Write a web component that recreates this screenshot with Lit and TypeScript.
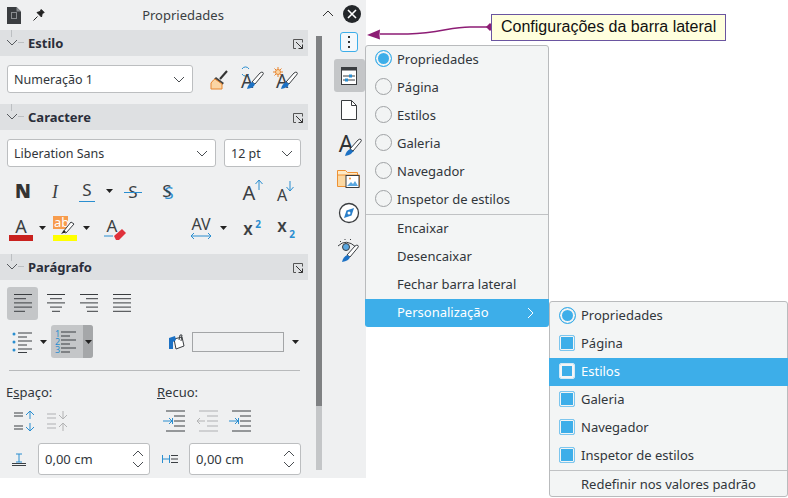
import { LitElement, html, css, svg } from "lit";
import { customElement } from "lit/decorators.js";

const dark = "#3b3f43";
const blue = "#2a8ed0";
const ic = (w: number, h: number, body: unknown) =>
  html`<svg class="ic" width=${w} height=${h} viewBox="0 0 ${w} ${h}" fill="none">${body}</svg>`;
const line = (x1: number, y1: number, x2: number, y2: number, c = dark, w = 1) =>
  svg`<line x1=${x1} y1=${y1} x2=${x2} y2=${y2} stroke=${c} stroke-width=${w}/>`;
const txt = (x: number, y: number, s: string, size: number, fill = dark, weight = "400", family = "Noto Sans", style = "normal") =>
  svg`<text x=${x} y=${y} font-size=${size} font-weight=${weight} font-style=${style} font-family=${family} fill=${fill} text-anchor="middle">${s}</text>`;

const brushTail = (dx: number, dy: number) => svg`
  <path d="M${dx + 8} ${dy + 15}L${dx + 16} ${dy + 6}q2-1.500 3-.5t-.5 2.500L${dx + 11} ${dy + 17}z" fill="#fff" stroke=${dark}/>
  <path d="M${dx + 3} ${dy + 22}q1-5 5-7l3 2q-1 4-8 5z" fill="#1c71c4"/>`;
const arrowDrop = html`<svg class="ic" width="14" height="8" viewBox="0 0 14 8"><path d="M3 2h7l-3.500 4z" fill="#222"/></svg>`;
const chevron = html`<svg class="ic" width="12" height="7" viewBox="0 0 12 7" fill="none"><path d="M1 1l5 5 5-5" stroke="#4a4e52"/></svg>`;
const launcher = html`<svg class="ic" width="10" height="10" viewBox="0 0 10 10" fill="none"><path d="M9.500 3.500V.5H.5v9H3" stroke="#555"/><path d="M3 3l6.500 6.500M9.500 5.500v4h-4" stroke="#333"/></svg>`;

const alignIcon = (kind: string) => {
  const rows = [[0, 18], [0, 12], [0, 18], [0, 18], [0, 11]];
  const center = [[0, 18], [3, 15], [0, 18], [3, 15], [5, 13]];
  const right = [[0, 18], [6, 18], [0, 18], [6, 18], [7, 18]];
  const just = [[0, 18], [0, 18], [0, 18], [0, 18], [0, 18]];
  const set = kind === "l" ? rows : kind === "c" ? center : kind === "r" ? right : just;
  return ic(18, 21, set.map((r, i) => line(r[0], 1.5 + i * 4.2, r[1], 1.5 + i * 4.2, "#3a3d40")));
};

const indentIcon = (kind: string) =>
  kind === "off"
    ? ic(19, 22, svg`<g opacity=".35">${line(0, 1, 19, 1)}${line(8, 6, 19, 6)}${line(8, 11, 19, 11)}${line(8, 16, 19, 16)}${line(0, 21, 19, 21)}<path d="M-2 11h8M1 8l-3 3 3 3" stroke="#444"/></g>`)
    : ic(19, 22, svg`${line(0, 1, 19, 1)}${line(8, 6, 19, 6)}${line(8, 11, 19, 11)}${line(8, 16, 19, 16)}${line(0, 21, 19, 21)}<path d="M-3 11h9M3 8l3 3-3 3M6.500 8v6" stroke=${blue}/>`);

const section = (title: string) => html`
  <div class="sec">
    <svg class="twig" width="26" height="26" viewBox="0 0 26 26" fill="none">
      <path d="M11.500 0v7M18 12.500h6" stroke="#bcbfc2"/>
      <path d="M7 10l5 5 5-5" stroke="#55595d"/>
    </svg>
    <span class="sec-t">${title}</span>
    <span class="launch">${launcher}</span>
  </div>`;

const menuItems = ["Propriedades", "Página", "Estilos", "Galeria", "Navegador", "Inspetor de estilos"];

@customElement("app-root")
export class AppRoot extends LitElement {
  static styles = css`
    :host { display: block; width: 788px; height: 498px; position: relative; overflow: hidden; background: #fff; font-family: "Noto Sans", sans-serif; font-size: 13px; color: #232629; }
    .ic { display: block; overflow: visible; }
    .panel { display: flex; width: 366px; height: 478px; background: #eff0f1; }
    .deck { width: 308px; flex: none; display: flex; flex-direction: column; }
    .title { height: 30px; display: flex; align-items: center; padding-left: 7px; gap: 12px; position: relative; }
    .title-t { position: absolute; left: 0; right: -58px; text-align: center; font-size: 13px; color: #3a3e42; top: 6px; }
    .sec { height: 26px; background: #dee0e2; display: flex; align-items: center; position: relative; flex: none; }
    .twig { flex: none; margin-right: 2px; }
    .sec-t { font-weight: 700; font-size: 13px; color: #2a2e3a; }
    .launch { margin-left: auto; margin-right: 5px; margin-top: 2px; }
    .c1 { height: 48px; display: flex; align-items: center; padding: 0 0 2px 7px; box-sizing: border-box; }
    .box { background: #fff; border: 1px solid #bcbec0; border-radius: 3px; box-sizing: border-box; display: flex; align-items: center; justify-content: space-between; padding: 0 7px 0 6px; color: #31363b; font-size: 12.5px; }
    .s-style { width: 186px; height: 28px; flex: none; }
    .t1 { display: flex; margin-left: 13px; gap: 8px; align-items: center; }
    .c2 { height: 124px; padding: 9px 7px 0; box-sizing: border-box; }
    .selects { display: flex; gap: 8px; }
    .s-font { width: 209px; height: 28px; }
    .s-size { width: 77px; height: 28px; }
    .r1 { display: grid; grid-template-columns: 32px 32px 32px 14px 32px 2px 32px 53px 32px 1px 32px; height: 32px; margin-top: 8px; align-items: center; justify-items: center; }
    .r2 { display: grid; grid-template-columns: 28px 1px 14px 30px 14px 5px 32px 54px 32px 14px 6px 32px 2px 32px; height: 32px; margin-top: 5px; align-items: center; justify-items: center; }
    .shadow { font-size: 17px; line-height: 20px; color: #3b3f43; text-shadow: 2px 2px 0 #2a8ed0; }
    .c3 { flex: 1; padding: 7px 7px 0; box-sizing: border-box; }
    .aligns { display: flex; gap: 2px; }
    .ab { width: 31px; height: 33px; display: flex; align-items: center; justify-content: center; border-radius: 3px; }
    .ab.on { background: #c4c6c8; }
    .lists { display: flex; align-items: center; height: 33px; margin-top: 5px; }
    .lists > * { flex: none; }
    .lb { width: 30px; display: flex; justify-content: center; }
    .num { width: 42px; height: 33px; background: #c4c6c8; border-radius: 3px; display: flex; overflow: hidden; }
    .num-a { width: 32px; display: flex; align-items: center; padding-left: 4px; box-sizing: border-box; }
    .digits { font-size: 9px; line-height: 8px; color: #2a8ed0; width: 6px; }
    .num-b { width: 10px; background: #a5a7a9; display: flex; align-items: center; justify-content: center; }
    .para { margin-left: 75px; margin-right: 7px; }
    .swatch { width: 92px; height: 20px; border: 1px solid #a3a5a7; box-sizing: border-box; background: #eff0f1; margin-right: 5px; }
    .sep { height: 1px; background: #b8babc; margin: 12px 1px 0 2px; }
    .sp { display: flex; margin-top: 12px; margin-left: -1px; }
    .col { width: 151px; flex: none; }
    .lbl { font-size: 13px; line-height: 18px; color: #31363b; }
    .u { text-decoration: underline; }
    .tools { display: flex; align-items: center; height: 24px; margin-top: 8px; }
    .sp-a { padding-left: 8px; gap: 12px; }
    .ind-a { padding-left: 9px; gap: 14px; }
    .field { display: flex; align-items: center; margin-top: 10px; margin-left: -7px; }
    .fi { width: 38px; flex: none; display: flex; justify-content: center; }
    .fj { width: 39px; flex: none; display: flex; justify-content: center; }
    .spin { width: 112px; height: 32px; padding: 0 5px 0 6px; font-size: 13px; }
    .tabs { flex: 1; position: relative; display: flex; }
    .scroll { width: 24px; flex: none; padding-left: 8px; padding-top: 36px; box-sizing: border-box; }
    .thumb { width: 6px; height: 370px; background: #7f8183; }
    .thumb2 { width: 6px; height: 64px; background: #c4c6c8; }
    .tabcol { width: 34px; flex: none; display: flex; flex-direction: column; align-items: center; }
    .top { height: 28px; width: 100%; display: flex; }
    .tb { display: flex; align-items: center; justify-content: center; }
    .more { width: 18px; height: 20px; border: 1px solid #3daee9; border-radius: 3px; box-sizing: border-box; background: #f4f8fb; margin-top: 4px; margin-bottom: 7px; display: flex; align-items: center; justify-content: center; }
    .act { width: 31px; height: 33px; background: #c4c6c8; border-radius: 3px; }
    .t-page { margin-top: 8px; }
    .t-a { margin-top: 12px; }
    .t-g { margin-top: 10px; }
    .t-n { margin-top: 14px; }
    .t-e { margin-top: 15px; }
    .topabs { position: absolute; top: 0; left: 0; right: 0; height: 28px; }
    .up { position: absolute; left: 14px; top: 10px; }
    .close { position: absolute; left: 35px; top: 5px; }
    .menu { position: absolute; background: #f3f5f5; border: 1px solid #b9bbbd; border-radius: 3px; box-sizing: border-box; color: #31363b; }
    .m1 { left: 365px; top: 45px; width: 184px; height: 281px; }
    .m2 { left: 549px; top: 301px; width: 239px; height: 196px; }
    .mi { height: 28px; display: flex; align-items: center; position: relative; padding-left: 31px; padding-bottom: 2px; box-sizing: border-box; }
    .mi.hi { background: #3daee9; color: #fff; }
    .m1 .hi { border-radius: 0 0 3px 3px; margin: 0 -1px -1px; padding-left: 32px; }
    .m2 .hi { margin: 0 -1px; padding-left: 32px; }
    .msep { height: 1px; background: #c0c2c4; }
    .mark { position: absolute; left: 9px; top: 4px; width: 17px; height: 17px; box-sizing: border-box; background: #f2f4f4; border: 1px solid #9fa2a4; border-radius: 50%; }
    .m2 .mark { left: 9px; top: 5px; }
    .mark.sel { border: 1px solid #3daee9; background: #3daee9; box-shadow: inset 0 0 0 2px #f2f4f4; }
    .chk { position: absolute; left: 9px; top: 5px; width: 16px; height: 16px; box-sizing: border-box; border: 1px solid #7dc6ee; border-radius: 2px; background: #3daee9; box-shadow: inset 0 0 0 1px #f2f4f4; }
    .hi .chk { left: 10px; background: #3daee9; border: 1px solid #d5e9f5; box-shadow: inset 0 0 0 2px #f4f5f6; }
    .arrow { position: absolute; right: 15px; top: 8px; }
    .callout { position: absolute; left: 491px; top: 14px; width: 235px; height: 27px; box-sizing: border-box; background: #ffffdd; border: 1px solid #6a55a0; font-family: "Liberation Sans", sans-serif; font-size: 16px; color: #111; padding-left: 9px; line-height: 24px; white-space: nowrap; }
    .conn { position: absolute; left: 360px; top: 14px; }
  `;

  render() {
    return html`
      <div class="panel">
        <div class="deck">
          <div class="title">
            ${ic(14, 17, svg`<path d="M0 0h9.500L14 4.500V17H0z" fill="#3a3d40"/><rect x="4.500" y="5.500" width="5" height="6" stroke="#8a8d90" fill="none"/><path d="M9.500 0L14 4.500H9.500z" fill="#8a8d90"/>`)}
            ${ic(12, 12, svg`<path d="M.5 11.500l4-4M4 3.500l4.500 4.500.7-3.500 2-1-3-3-1 2z" stroke="#222" fill="#222"/>`)}
            <span class="title-t">Propriedades</span>
          </div>
          ${section("Estilo")}
          <div class="c1">
            <div class="box s-style"><span>Numeração 1</span>${chevron}</div>
            <div class="t1">
              ${ic(24, 24, svg`<path d="M14 12l7-8" stroke="#333" stroke-width="2"/><path d="M10 10l8 6-2 2-8-6z" fill="#444"/><path d="M5 16q3-4 4-4l7 5v5H5z" fill="#fbd5a4" stroke="#e8852f"/>`)}
              ${ic(26, 26, svg`<path d="M4 3a4 4 0 0 1 7 0M11 8a4 4 0 0 1-7 0" stroke="#2a8ed0" fill="none"/>${txt(9, 22, "A", 19)}${brushTail(6, 1)}`)}
              ${ic(26, 26, svg`<circle cx="6" cy="6" r="2.500" fill="#fbd5a4" stroke="#e8852f"/><path d="M6 1v2M6 9v2M1 6h2M9 6h2M2.500 2.500l1.500 1.500M8 8l1.500 1.500M2.500 9.500L4 8M8 4l1.500-1.500" stroke="#e8852f"/>${txt(10, 22, "A", 19)}${brushTail(6, 1)}`)}
            </div>
          </div>
          ${section("Caractere")}
          <div class="c2">
            <div class="selects">
              <div class="box s-font"><span>Liberation Sans</span>${chevron}</div>
              <div class="box s-size"><span>12 pt</span>${chevron}</div>
            </div>
            <div class="r1">
              ${ic(18, 20, txt(9, 17, "N", 19, "#333", "900"))}
              ${ic(14, 20, txt(7, 17, "I", 18, dark, "400", "Liberation Serif", "italic"))}
              ${ic(18, 24, svg`${txt(9, 17, "S", 17)}${line(1, 22.5, 17, 22.5, blue)}`)}
              ${arrowDrop}
              ${ic(18, 24, svg`${txt(9, 19, "S", 17)}${line(0, 13.500, 18, 13.500, blue)}`)}
              <span></span>
              <span class="shadow">S</span>
              <span></span>
              ${ic(22, 26, svg`${txt(8, 22, "A", 20)}<path d="M18 12V2M14.500 6L18 2l3.500 4" stroke=${blue}/>`)}
              <span></span>
              ${ic(20, 24, svg`${txt(7, 22, "A", 16)}<path d="M15 2v10M11.500 8l3.500 4 3.500-4" stroke=${blue}/>`)}
            </div>
            <div class="r2">
              ${ic(24, 26, svg`${txt(12, 18, "A", 18)}<rect y="20" width="24" height="6" fill="#c9211e"/>`)}
              <span></span>
              ${arrowDrop}
              ${ic(24, 26, svg`<rect x="0" y="1" width="15" height="13" fill="#f79c4d"/><text x="1" y="12" font-size="13" font-family="Noto Sans" fill="#fff">ab</text><path d="M10 17l8-10 3 2-8 9z" fill="#fff" stroke=${dark}/><path d="M8 19l3-4 2 2z" fill="#222"/><rect y="20" width="24" height="6" fill="#ffff00"/>`)}
              ${arrowDrop}
              <span></span>
              ${ic(24, 26, svg`${txt(9, 17, "A", 17)}${line(1, 21, 10, 21, blue)}<path d="M11 21l8-7 4 4-7 7h-3z" fill="#e0313b"/>`)}
              <span></span>
              ${ic(22, 26, svg`${txt(11, 15, "AV", 16)}<path d="M1 21h20M4 18l-3 3 3 3M18 18l3 3-3 3" stroke=${blue}/>`)}
              ${arrowDrop}
              <span></span>
              ${ic(22, 20, svg`${txt(6, 17, "x", 17, dark, "600")}${txt(16, 10, "2", 10, blue, "700")}`)}
              <span></span>
              ${ic(22, 20, svg`${txt(6, 14, "x", 17, dark, "600")}${txt(16, 20, "2", 10, blue, "700")}`)}
            </div>
          </div>
          ${section("Parágrafo")}
          <div class="c3">
            <div class="aligns">
              <div class="ab on">${alignIcon("l")}</div>
              <div class="ab">${alignIcon("c")}</div>
              <div class="ab">${alignIcon("r")}</div>
              <div class="ab">${alignIcon("j")}</div>
            </div>
            <div class="lists">
              <div class="lb">${ic(21, 22, svg`<circle cx="2" cy="3" r="1.500" fill=${blue}/><circle cx="2" cy="11" r="1.500" fill=${blue}/><circle cx="2" cy="19" r="1.500" fill=${blue}/>
                ${line(6, 2, 20, 2)}${line(6, 6, 15, 6)}${line(6, 10, 20, 10)}${line(6, 14, 15, 14)}${line(6, 18, 20, 18)}${line(6, 21.5, 15, 21.5)}`)}</div>
              <div>${arrowDrop}</div>
              <div class="num">
                <div class="num-a">
                  <span class="digits">1<br />2<br />3</span>
                  ${ic(15, 24, svg`${line(0, 2, 15, 2)}${line(0, 6, 9, 6)}${line(0, 10, 15, 10)}${line(0, 14, 9, 14)}${line(0, 18, 15, 18)}${line(0, 22, 9, 22)}`)}
                </div>
                <div class="num-b"><svg class="ic" width="9" height="6" viewBox="0 0 9 6"><path d="M1 1h7L4.500 5z" fill="#222"/></svg></div>
              </div>
              <div class="para">${ic(17, 17, svg`<path d="M6 6l8-2 2 9-8 3z" fill="#fff" stroke=${dark}/><path d="M1 16V5l6-2 1 4-3 2v7z" fill="#1c71c4"/><path d="M11 7l1-5 2 0-1 6" stroke=${dark}/>`)}</div>
              <div class="swatch"></div>
              ${arrowDrop}
            </div>
            <div class="sep"></div>
            <div class="sp">
              <div class="col">
                <div class="lbl">E<span class="u">s</span>paço:</div>
                <div class="tools sp-a">
                  ${ic(21, 22, svg`${line(0, 3, 9, 3)}${line(0, 6, 9, 6)}${line(0, 16, 9, 16)}${line(0, 19, 9, 19)}<path d="M16 9V1M12 5l4-4 4 4M16 13v8M12 17l4 4 4-4" stroke=${blue}/>`)}
                  ${ic(21, 22, svg`<g opacity=".35">${line(0, 4, 9, 4)}${line(0, 8, 9, 8)}${line(0, 14, 9, 14)}${line(0, 18, 9, 18)}<path d="M16 1v8M12 5l4 4 4-4M16 21v-8M12 17l4-4 4 4" stroke="#444"/></g>`)}
                </div>
              </div>
              <div class="col">
                <div class="lbl"><span class="u">R</span>ecuo:</div>
                <div class="tools ind-a">
                  ${indentIcon("on")}
                  ${indentIcon("off")}
                  ${indentIcon("on")}
                </div>
              </div>
            </div>
            <div class="field">
              <div class="fi">${ic(14, 13, svg`<path d="M4 1h6M7 1v8M4 9h6" stroke=${blue}/>${line(0, 10.5, 14, 10.5)}${line(0, 12.5, 14, 12.5)}`)}</div>
              <div class="box spin"><span>0,00 cm</span>${ic(12, 18, svg`<path d="M1 6l5-5 5 5M1 12l5 5 5-5" stroke="#4a4e52"/>`)}</div>
              <div class="fj">${ic(16, 8, svg`<path d="M.5 0v8M7.500 0v8M1 4h6" stroke=${blue}/>${line(9, .5, 16, .5)}${line(9, 4, 16, 4)}${line(9, 7.5, 16, 7.5)}`)}</div>
              <div class="box spin"><span>0,00 cm</span>${ic(12, 18, svg`<path d="M1 6l5-5 5 5M1 12l5 5 5-5" stroke="#4a4e52"/>`)}</div>
            </div>
          </div>
        </div>
        <div class="tabs">
          <div class="scroll"><div class="thumb"></div><div class="thumb2"></div></div>
          <div class="tabcol">
            <div class="top"></div>
            <div class="more">${ic(2, 12, svg`<rect y="0" width="2" height="2" fill="#333"/><rect y="5" width="2" height="2" fill="#333"/><rect y="10" width="2" height="2" fill="#333"/>`)}</div>
            <div class="tb act">${ic(16, 18, svg`<rect x=".5" y=".5" width="15" height="17" fill="#fff" stroke="#3a3d40"/><rect width="16" height="3.500" fill="#3a3d40"/>${line(2, 9, 14, 9)}${line(2, 13, 14, 13)}<rect x="8" y="7.500" width="3" height="3" fill=${blue}/><rect x="4" y="11.500" width="3" height="3" fill=${blue}/>`)}</div>
            <div class="t-page">${ic(16, 20, svg`<path d="M.5.5h10l5 5v14H.5z" fill="#fff" stroke="#3a3d40"/><path d="M10.500.5v5h5" stroke="#3a3d40"/>`)}</div>
            <div class="t-a">${ic(24, 26, svg`${txt(9, 20, "A", 23, "#2f3336")}${brushTail(5, 2)}`)}</div>
            <div class="t-g">${ic(24, 20, svg`<path d="M.5 2.500h8l2 2h10v4H.5z" fill="#fdeac7" stroke="#ee9133"/><path d="M.5 18.500V7h22v11.500z" fill="#fcd9a3" stroke="#ee9133"/><rect x="9" y="7.500" width="13" height="12" fill="#fff" stroke="#3a3d40"/><path d="M10 18l4-4 2 2 2-3 3 5z" fill="#5aa7e0"/><circle cx="13" cy="10.500" r="1" fill="#ee9133"/>`)}</div>
            <div class="t-n">${ic(22, 22, svg`<circle cx="11" cy="11" r="9.500" fill="#fff" stroke="#3a3d40" stroke-width="1.300"/><path d="M16 6l-2.500 7.500L6 16l2.500-7.500z" fill="#2a7fc9"/><circle cx="11" cy="11" r="1.500" fill="#fff"/>`)}</div>
            <div class="t-e">${ic(24, 24, svg`<path d="M1 7q8-8 18 1" stroke="#3a3d40" fill="none"/><path d="M3 3l1-1M8 1v-1M13 1l1-1" stroke="#3a3d40"/><circle cx="9" cy="8" r="3.500" fill="#5aa7e0" stroke="#3a3d40"/>${brushTail(2, 1)}`)}</div>
          </div>
          <div class="topabs">
            <span class="up">${ic(12, 7, svg`<path d="M1 6l5-5 5 5" stroke="#333"/>`)}</span>
            <span class="close">${ic(18, 18, svg`<circle cx="9" cy="9" r="9" fill="#232629"/><path d="M5 5l8 8M13 5l-8 8" stroke="#fff" stroke-width="1.600"/>`)}</span>
          </div>
        </div>
      </div>

      <svg class="conn" width="135" height="30" viewBox="0 0 135 30" fill="none">
        <path d="M130 13h-20C90 13 80 19 48 20h-28" stroke="#8d1d75" stroke-width="1.400"/>
        <path d="M7 21l13-5.500q-1 5.500 0 10z" fill="#8d1d75"/>
        <path d="M126 13l4-4 4 4-4 4z" fill="#8d1d75"/>
      </svg>
      <div class="callout">Configurações da barra lateral</div>

      <div class="menu m1">
        ${menuItems.map((t, i) => html`<div class="mi"><span class="mark ${i === 0 ? "sel" : ""}"></span>${t}</div>`)}
        <div class="msep"></div>
        <div class="mi">Encaixar</div>
        <div class="mi">Desencaixar</div>
        <div class="mi">Fechar barra lateral</div>
        <div class="mi hi">Personalização
          <span class="arrow">${ic(7, 12, svg`<path d="M1 1l5 5-5 5" stroke="#fff"/>`)}</span>
        </div>
      </div>
      <div class="menu m2">
        ${menuItems.map((t, i) => html`<div class="mi ${i === 2 ? "hi" : ""}">${i === 0 ? html`<span class="mark sel"></span>` : html`<span class="chk"></span>`}${t}</div>`)}
        <div class="msep"></div>
        <div class="mi">Redefinir nos valores padrão</div>
      </div>
    `;
  }
}
